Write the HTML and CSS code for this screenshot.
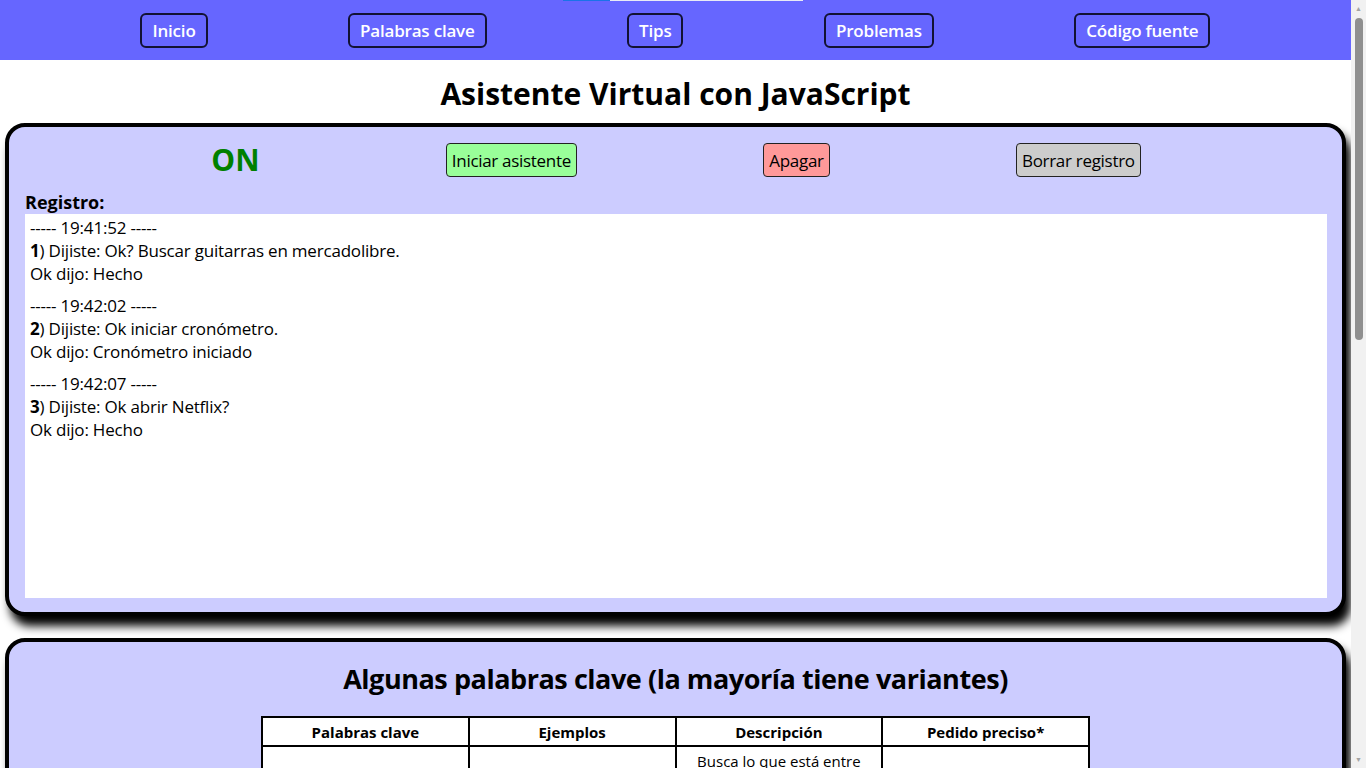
FILE: index.html
```html
<!DOCTYPE html>
<html lang="es">
<head>
<meta charset="utf-8">
<title>Asistente Virtual con JavaScript</title>
<link rel="stylesheet" href="styles.css">
</head>
<body>
<div class="loadbar"><span class="load-a"></span><span class="load-b"></span></div>
<div class="scrollbar" aria-hidden="true">
  <span class="sb-arrow">&#9650;</span>
  <span class="sb-track"><span class="sb-thumb"></span></span>
  <span class="sb-arrow">&#9660;</span>
</div>
<nav class="topnav">
  <a class="navbtn" href="#inicio">Inicio</a>
  <a class="navbtn" href="#palabras">Palabras clave</a>
  <a class="navbtn" href="#tips">Tips</a>
  <a class="navbtn" href="#problemas">Problemas</a>
  <a class="navbtn" href="#codigo">Código fuente</a>
</nav>
<h1 class="title" id="inicio">Asistente Virtual con JavaScript</h1>
<section class="panel assistant">
  <div class="controls">
    <span class="status">ON</span>
    <button class="btn btn-start">Iniciar asistente</button>
    <button class="btn btn-stop">Apagar</button>
    <button class="btn btn-clear">Borrar registro</button>
  </div>
  <div class="log-label">Registro:</div>
  <div class="log">
    <div class="entry">
      <div>----- 19:41:52 -----</div>
      <div><b>1</b>) Dijiste: Ok? Buscar guitarras en mercadolibre.</div>
      <div>Ok dijo: Hecho</div>
    </div>
    <div class="entry">
      <div>----- 19:42:02 -----</div>
      <div><b>2</b>) Dijiste: Ok iniciar cronómetro.</div>
      <div>Ok dijo: Cronómetro iniciado</div>
    </div>
    <div class="entry">
      <div>----- 19:42:07 -----</div>
      <div><b>3</b>) Dijiste: Ok abrir Netflix?</div>
      <div>Ok dijo: Hecho</div>
    </div>
  </div>
</section>
<section class="panel keywords" id="palabras">
  <h2 class="section-title">Algunas palabras clave (la mayoría tiene variantes)</h2>
  <table class="kw-table">
    <thead>
      <tr><th>Palabras clave</th><th>Ejemplos</th><th>Descripción</th><th>Pedido preciso*</th></tr>
    </thead>
    <tbody>
      <tr>
        <td>Busca / Buscar</td>
        <td>"Ok busca la definición de inteligencia artificial en google, por favor"</td>
        <td>Busca lo que está entre "busca" y "en" en el sitio que se indique (google, youtube, wikipedia o mercadolibre)</td>
        <td>No</td>
      </tr>
      <tr>
        <td>Abrir / Abre</td>
        <td>"Ok abrir Netflix"</td>
        <td>Abre en una pestaña nueva el sitio que se indique</td>
        <td>No</td>
      </tr>
      <tr>
        <td>Hora</td>
        <td>"Ok qué hora es"</td>
        <td>Dice la hora actual</td>
        <td>No</td>
      </tr>
      <tr>
        <td>Fecha / Día</td>
        <td>"Ok qué día es hoy"</td>
        <td>Dice la fecha actual</td>
        <td>No</td>
      </tr>
      <tr>
        <td>Iniciar cronómetro</td>
        <td>"Ok iniciar cronómetro"</td>
        <td>Comienza a contar el tiempo desde cero</td>
        <td>Sí</td>
      </tr>
      <tr>
        <td>Detener cronómetro</td>
        <td>"Ok detener cronómetro"</td>
        <td>Detiene el cronómetro y dice el tiempo transcurrido</td>
        <td>Sí</td>
      </tr>
      <tr>
        <td>Temporizador</td>
        <td>"Ok temporizador de 5 minutos"</td>
        <td>Avisa cuando se cumple el tiempo indicado</td>
        <td>No</td>
      </tr>
      <tr>
        <td>Chiste</td>
        <td>"Ok contame un chiste"</td>
        <td>Cuenta un chiste al azar</td>
        <td>No</td>
      </tr>
      <tr>
        <td>Apagar</td>
        <td>"Ok apagar"</td>
        <td>Apaga el asistente</td>
        <td>Sí</td>
      </tr>
    </tbody>
  </table>
  <p class="note">* Si dice "Sí", hay que decir exactamente la frase, sin agregar otras palabras.</p>
</section>
<section class="panel tips" id="tips">
  <h2 class="section-title">Tips</h2>
  <ul class="list">
    <li>Siempre empezar el pedido con la palabra "Ok".</li>
    <li>Hablar claro y sin pausas largas.</li>
    <li>Usar Google Chrome para un mejor reconocimiento de voz.</li>
  </ul>
</section>
</body>
</html>
```
FILE: styles.css
```css
html, body {
  margin: 0;
  padding: 0;
}
body {
  margin-right: 15px;
  font-family: "Open Sans", "Noto Sans", sans-serif;
  color: #000;
  background: #fff;
}
.loadbar {
  position: absolute;
  top: 0;
  left: 563px;
  display: flex;
  height: 1px;
}
.load-a {
  width: 47px;
  background: #1a73e8;
}
.load-b {
  width: 193px;
  background: #e8eaf6;
}
.scrollbar {
  position: fixed;
  top: 0;
  right: 0;
  width: 15px;
  height: 100vh;
  background: #f1f1f1;
  display: flex;
  flex-direction: column;
  align-items: center;
}
.sb-arrow {
  height: 17px;
  font-size: 7px;
  line-height: 17px;
  color: #a3a3a3;
}
.sb-track {
  flex: 1;
  width: 100%;
  display: flex;
  justify-content: center;
}
.sb-thumb {
  width: 8px;
  height: 322px;
  margin-top: 1px;
  background: #8f8f8f;
  border-radius: 4px;
}
.topnav {
  height: 60px;
  background: #6666ff;
  display: flex;
  justify-content: space-evenly;
  align-items: center;
}
.navbtn {
  display: inline-block;
  height: 35px;
  box-sizing: border-box;
  padding: 0 10px;
  line-height: 31px;
  border: 2px solid #121233;
  border-radius: 6px;
  color: #fff;
  font-weight: 600;
  font-size: 17px;
  text-decoration: none;
  letter-spacing: -0.2px;
}
.title {
  margin: 14px 0 9px;
  font-size: 30px;
  line-height: 40px;
  text-align: center;
  font-weight: 700;
}
.panel {
  margin: 0 5px 22px;
  background: #ccccff;
  border: 4px solid #000;
  border-radius: 20px;
  box-shadow: 5px 10px 10px #000;
}
.assistant {
  padding: 16px 15px 14px 16px;
}
.controls {
  display: flex;
  justify-content: space-evenly;
  align-items: center;
  height: 34px;
}
.status {
  color: #008000;
  font-weight: 700;
  font-size: 30px;
  line-height: 34px;
}
.btn {
  height: 34px;
  padding: 0 5px;
  font-family: inherit;
  font-size: 17px;
  border: 1px solid #222;
  border-radius: 4px;
  color: #000;
  letter-spacing: -0.3px;
}
.btn-start { background: #99ff99; }
.btn-stop { background: #ff9999; }
.btn-clear { background: #cccccc; }
.log-label {
  margin-top: 13px;
  font-weight: 700;
  font-size: 18px;
  line-height: 24px;
}
.log {
  height: 384px;
  box-sizing: border-box;
  background: #fff;
  padding: 2px 5px;
  font-size: 17px;
  line-height: 23px;
  letter-spacing: -0.2px;
}
.entry {
  margin-bottom: 9px;
}
.keywords {
  padding: 18px 16px 20px;
}
.section-title {
  margin: 0 0 18px;
  text-align: center;
  font-size: 27px;
  line-height: 38px;
  font-weight: 700;
  letter-spacing: -0.45px;
}
.kw-table {
  margin: 0 auto;
  width: 829px;
  border-collapse: collapse;
  table-layout: fixed;
  background: #fff;
  font-size: 15px;
  line-height: 20px;
}
.kw-table th,
.kw-table td {
  border: 2px solid #000;
  text-align: center;
  vertical-align: middle;
}
.kw-table th {
  padding: 4px 8px 3px;
  font-weight: 700;
}
.kw-table td {
  padding: 4px 10px;
  height: 70px;
}
.note {
  text-align: center;
  font-size: 15px;
  margin: 16px 0 0;
}
.tips {
  padding: 18px 24px 20px;
}
.list {
  font-size: 17px;
  line-height: 28px;
}
```
